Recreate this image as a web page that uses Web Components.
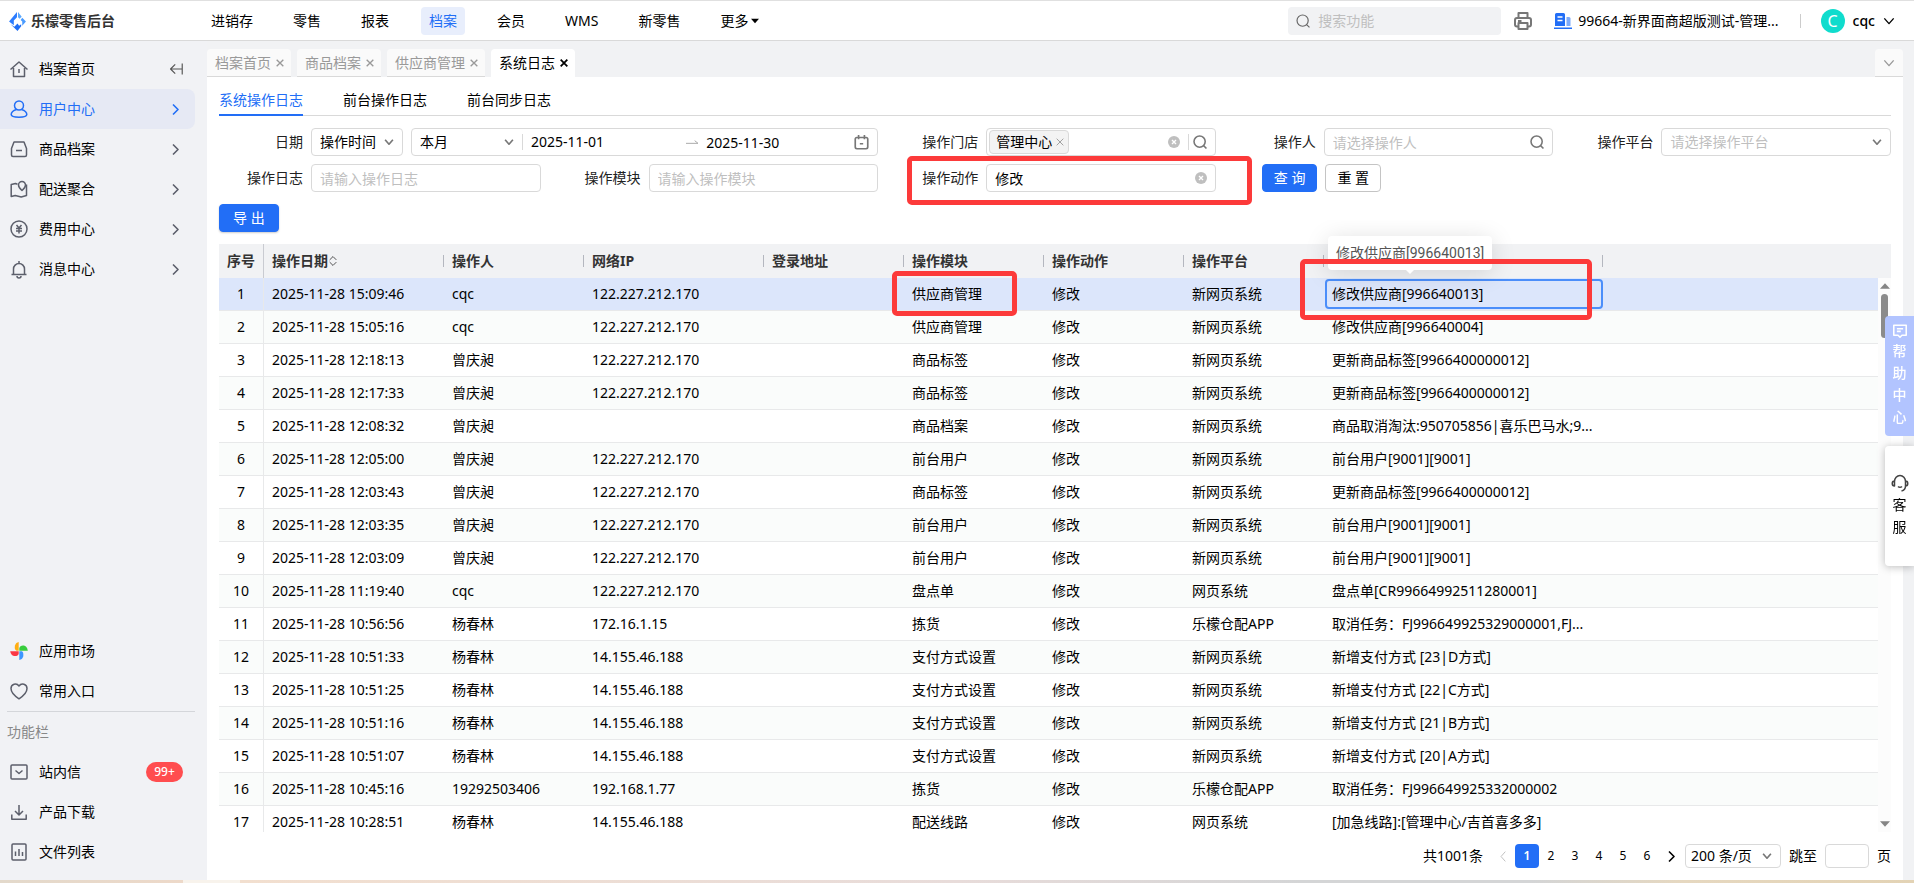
<!DOCTYPE html>
<html lang="zh-CN">
<head>
<meta charset="utf-8">
<title>系统日志</title>
<style>
    body {
        margin: 0;
        font: 14px/22px "Noto Sans", "Noto Sans CJK SC", sans-serif;
        color: #000;
        overflow: hidden;
    }
</style>
</head>
<body>
<log-app></log-app>

<script>
const base = `
    * { box-sizing: border-box; }
    button, input, select { font: inherit; color: inherit; margin: 0; padding: 0; border: 0; background: none; outline: 0; min-width: 0; }
    button { cursor: pointer; }
    select { appearance: none; text-overflow: ellipsis; }
    input::placeholder { color: #bfbfbf; }
    a { color: inherit; text-decoration: none; }
`;

// every icon is drawn on an 18 x 18 grid
const icons = {
    logo: '<g stroke="none"><path fill="#2b7cff" d="M8.500 0v5L5.500 8v4.500L1 9z"/><path fill="#5aa8ff" d="M9.500 0L13 4.500l-2 2-1.500-1.500z"/><path fill="#4a9bff" d="M13.500 5.500L17 9l-3.500 4V9L12 7.500z"/><path fill="#1f6ef5" d="M2.500 11.500L6 14l3-3 1.500 2 2-1.500v2L9 18z"/></g>',
    home: '<path d="M.5 9.500L9 2l8.500 7.500M3.500 8v8.500h11V8M9 9v4"/>',
    user: '<circle cx="9" cy="5.500" r="4.500"/><path d="M6.500 9.500C3.500 10.500 1.200 12.500 1.200 14.500c0 2 3 2.700 7.800 2.700s7.800-.7 7.800-2.700c0-2-2.300-4-5.300-5"/>',
    box: '<path d="M4 2h10l2.500 6.500V15a1.500 1.500 0 0 1-1.500 1.500H3A1.500 1.500 0 0 1 1.500 15V8.500zM6 10.500h6"/>',
    map: '<path d="M7.500 4.200L5.500 3.500 1.200 4.500v12l4-1 6 1.500 5.300-1.500V4.500"/><path d="M12 10.500S8.500 7.500 8.500 5a3.500 3.500 0 0 1 7 0c0 2.500-3.500 5.500-3.500 5.500z"/>',
    yen: '<circle cx="9" cy="9" r="8"/><path d="M6.500 5L9 8l2.500-3M9 8v5.500M6 8.500h6M6 11h6"/>',
    bell: '<path d="M1.500 14.500h15M3.500 14.500V9a5.500 5.500 0 0 1 11 0v5.500M7 16a2 2 0 0 0 4 0M9 1v2.500"/>',
    market: '<g stroke="none"><path fill="#ffae13" d="M8.700 8.700H6.500C4.500 7.500 4.500 5.500 5 3.500 5.500 1.500 7 .3 8.700 0z"/><path fill="#38cd3d" d="M9.300 8.700V6c1-2.200 2.700-2.700 4.500-2.400 2 .4 3.500 2 4 5.100z"/><path fill="#3d96ff" d="M9.300 9.300H12c1.500 1.200 1.500 3.200 1.200 5.200-.5 2-2 3.200-3.900 3.500z"/><path fill="#fb3845" d="M8.700 9.300V12c-1 2-3 2.300-4.700 2C2 13.600.6 12 .2 9.300z"/></g>',
    heart: '<path d="M9 16.800C4 13.500 1 10 1 6.500 1 2 6.500.5 9 4c2.500-3.500 8-2 8 2.500 0 3.500-3 7-8 10.300z"/>',
    mail: '<rect x="1" y="2" width="16" height="14" rx="1"/><path d="M5.500 7.500L9 10.500l3.500-3"/>',
    download: '<path d="M9 2v9.500M5 8l4 4 4-4M1.800 11.500v4.700h14.400v-4.700"/>',
    chart: '<rect x="2" y="1" width="14" height="16" rx="1"/><path d="M5.500 8.500V13M9 6v7M12.500 9v4"/>',
    collapse: '<path d="M17 2v14M17 9H2M8 3L2 9l6 6"/>',
    right: '<path d="M6 3l6 6-6 6"/>',
    left: '<path d="M12 1L5 9l7 8"/>',
    down: '<path d="M2 5l7 8 7-8"/>',
    search: '<circle cx="8.500" cy="8.500" r="7.200"/><path d="M13.300 13.300l4 4"/>',
    printer: '<path d="M4.500 6V1h9v5M4.500 14.500H3A2 2 0 0 1 1 12.500V8a2 2 0 0 1 2-2h12a2 2 0 0 1 2 2v4.500a2 2 0 0 1-2 2h-1.500M4 9h3.500"/><rect x="4.500" y="11" width="9" height="6"/>',
    building: '<g stroke="none"><path fill="#226ef6" d="M1 2.500A1.500 1.500 0 0 1 2.500 1h7A1.500 1.500 0 0 1 11 2.500V14H1zM0 15.500h18V17H0z"/><path fill="#7fabf9" d="M12.500 5H15a1.500 1.500 0 0 1 1.500 1.500V14h-4z"/></g><path stroke="#fff" d="M3.500 5h5M3.500 8.500h5"/>',
    calendar: '<rect x="1.500" y="3" width="15" height="13.500" rx="2"/><path d="M5.500 0v5M12.500 0v5M7 10.500h4"/>',
    clear: '<circle cx="9" cy="9" r="9" fill="#bfbfbf" stroke="none"/><path stroke="#fff" stroke-width="2" d="M6 6l6 6M12 6l-6 6"/>',
    close: '<path d="M1.500 1.500l15 15M16.500 1.500l-15 15"/>',
    range: '<path d="M0 11h18l-5-4"/>',
    sort: '<path d="M3 7l6-6 6 6M3 11l6 6 6-6"/>',
    caret: '<path fill="currentColor" stroke="none" d="M0 4h18L9 14z"/>',
    help: '<path d="M1 1.500h16v13h-5.500L9 17l-2.500-2.500H1zM5 6h8M5 9.500h5"/>',
    service: '<path d="M3.500 11V7.500a5.500 6 0 0 1 11 0V12c0 2.500-2 4.500-4 5M3.500 7C.5 7 .5 12 3.500 12zM14.500 7c3 0 3 5 0 5M7 12.500c1 1 3 1 4 0"/>'
};

class UiIcon extends HTMLElement {
    connectedCallback() {
        const size = this.getAttribute("size") || 18;
        const stroke = this.getAttribute("stroke") || 1.5;
        this.attachShadow({mode: "open"}).innerHTML = `
            <style>
                :host { display: inline-flex; flex: none; }
                svg { display: block; fill: none; stroke: currentColor; stroke-linejoin: round; overflow: visible; }
            </style>
            <svg width="${size}" height="${size}" viewBox="0 0 18 18" stroke-width="${stroke}" aria-hidden="true">${icons[this.getAttribute("name")]}</svg>
        `;
    }
}

class AppHeader extends HTMLElement {
    connectedCallback() {
        const nav = ["进销存", "零售", "报表", "档案", "会员", "WMS", "新零售"];
        this.attachShadow({mode: "open"}).innerHTML = `
            <style>
                ${base}
                :host { display: flex; align-items: center; height: 41px; background: #fff; border-top: 1px solid #e0e0e0; border-bottom: 1px solid #d9d9d9; padding-top: 1px; }
                .brand { display: flex; align-items: center; gap: 4px; width: 203px; padding-left: 8px; font-weight: 700; color: #333; }
                nav { display: flex; gap: 24px; flex: 1; }
                nav a { display: flex; align-items: center; gap: 3px; height: 28px; padding: 0 8px; border-radius: 4px; }
                nav a.on { background: #e8eefc; color: #226ef6; }
                .search { display: flex; align-items: center; gap: 8px; width: 213px; height: 28px; padding: 0 8px; border-radius: 4px; background: #f1f2f4; color: #666; }
                .search input { flex: 1; }
                .print { display: flex; margin: 0 22px 0 13px; color: #777; }
                .store { display: flex; align-items: center; gap: 6px; }
                .user { display: flex; align-items: center; gap: 8px; margin: 0 19px 0 21px; font-weight: 500; }
                .user::before { content: ""; width: 1px; height: 14px; margin-right: 12px; background: #ccc; }
                .avatar { width: 24px; height: 24px; border-radius: 50%; background: #10dccd; color: #fff; line-height: 24px; text-align: center; font-weight: 400; font-size: 16px; }
            </style>
            <div class="brand"><ui-icon name="logo" size="19"></ui-icon>乐檬零售后台</div>
            <nav>
                ${nav.map(n => `<a href="#" class="${n === "档案" ? "on" : ""}">${n}</a>`).join("")}
                <a href="#">更多<ui-icon name="caret" size="8"></ui-icon></a>
            </nav>
            <div class="search"><ui-icon name="search" size="14"></ui-icon><input aria-label="搜索功能" placeholder="搜索功能"></div>
            <button class="print" aria-label="打印"><ui-icon name="printer" stroke="2"></ui-icon></button>
            <a class="store" href="#"><ui-icon name="building"></ui-icon>99664-新界面商超版测试-管理...</a>
            <div class="user"><span class="avatar">C</span>cqc<ui-icon name="down" size="12" stroke="2"></ui-icon></div>
        `;
    }
}

class MenuItem extends HTMLElement {
    connectedCallback() {
        this.attachShadow({mode: "open"}).innerHTML = `
            <style>
                ${base}
                :host { display: block; }
                a { display: flex; align-items: center; gap: 11px; height: 40px; margin-right: 12px; padding: 0 12px 0 10px; border-radius: 0 8px 8px 0; }
                ui-icon { color: #5c5f6b; }
                span { flex: 1; }
                :host([active]) a { background: #e6e9f4; color: #226ef6; }
                :host([active]) ui-icon { color: #226ef6; }
            </style>
            <a href="#"><ui-icon name="${this.getAttribute("icon")}"></ui-icon><span><slot></slot></span><slot name="end"></slot>
            ${this.hasAttribute("more") ? '<ui-icon name="right" size="15" stroke="2"></ui-icon>' : ""}</a>
        `;
    }
}

class SideMenu extends HTMLElement {
    connectedCallback() {
        this.attachShadow({mode: "open"}).innerHTML = `
            <style>
                ${base}
                :host { display: flex; flex-direction: column; width: 207px; flex: none; padding: 8px 0; background: #f1f2f5; }
                .space { flex: 1; }
                .line { height: 1px; margin: 0 12px 0 7px; background: #d4d6da; }
                .title { line-height: 40px; padding-left: 7px; color: #888; }
                .badge { min-width: 37px; height: 20px; border-radius: 10px; background: #ff4d4f; color: #fff; font-size: 12px; font-weight: 500; line-height: 20px; text-align: center; }
                .fold { color: #555; }
            </style>
            <menu-item icon="home">档案首页<ui-icon class="fold" slot="end" name="collapse" size="14"></ui-icon></menu-item>
            <menu-item icon="user" active more>用户中心</menu-item>
            <menu-item icon="box" more>商品档案</menu-item>
            <menu-item icon="map" more>配送聚合</menu-item>
            <menu-item icon="yen" more>费用中心</menu-item>
            <menu-item icon="bell" more>消息中心</menu-item>
            <div class="space"></div>
            <menu-item icon="market">应用市场</menu-item>
            <menu-item icon="heart">常用入口</menu-item>
            <div class="line"></div>
            <div class="title">功能栏</div>
            <menu-item icon="mail">站内信<b class="badge" slot="end">99+</b></menu-item>
            <menu-item icon="download">产品下载</menu-item>
            <menu-item icon="chart">文件列表</menu-item>
        `;
    }
}

class PageTabs extends HTMLElement {
    connectedCallback() {
        const tabs = ["档案首页", "商品档案", "供应商管理", "系统日志"];
        this.attachShadow({mode: "open"}).innerHTML = `
            <style>
                ${base}
                :host { display: flex; gap: 6px; height: 36px; padding-top: 8px; background: #f1f2f4; }
                button { display: flex; align-items: center; gap: 5px; height: 28px; padding: 0 7px 0 8px; border-radius: 4px 4px 0 0; border-bottom: 1px solid #d9d9d9; background: #fafafa; color: #999; }
                button.on { background: #fff; border-color: #fff; color: #000; }
                .list { margin-left: auto; padding: 0 8px; }
            </style>
            ${tabs.map(t => `<button class="${t === "系统日志" ? "on" : ""}">${t}<ui-icon name="close" size="8" stroke="${t === "系统日志" ? 4 : 3}"></ui-icon></button>`).join("")}
            <button class="list" aria-label="全部标签"><ui-icon name="down" size="12" stroke="2"></ui-icon></button>
        `;
    }
}

class SubTabs extends HTMLElement {
    connectedCallback() {
        this.attachShadow({mode: "open"}).innerHTML = `
            <style>
                ${base}
                :host { display: flex; gap: 40px; height: 39px; border-bottom: 1px solid #d9d9d9; }
                a { padding-top: 12px; height: 39px; }
                a.on { color: #226ef6; border-bottom: 2px solid #226ef6; }
            </style>
            <a class="on" href="#">系统操作日志</a>
            <a href="#">前台操作日志</a>
            <a href="#">前台同步日志</a>
        `;
    }
}

class FormField extends HTMLElement {
    connectedCallback() {
        this.attachShadow({mode: "open"}).innerHTML = `
            <style>
                :host { display: flex; align-items: center; gap: 8px; position: relative; min-width: 0; }
                .label { width: 84px; flex: none; text-align: right; color: #222; }
                .control { display: flex; gap: 8px; flex: 1; min-width: 0; }
            </style>
            <div class="label"><slot name="label"></slot></div>
            <div class="control"><slot></slot></div>
            <slot name="over"></slot>
        `;
    }
}

// red frame that marks a place, sized by the inset its user gives
class RedFrame extends HTMLElement {
    connectedCallback() {
        this.attachShadow({mode: "open"}).innerHTML = `
            <style>
                :host { display: block; position: absolute; z-index: 3; border: 5px solid #fc3a3a; border-radius: 5px; pointer-events: none; }
            </style>
        `;
    }
}

class FilterForm extends HTMLElement {
    connectedCallback() {
        this.attachShadow({mode: "open"}).innerHTML = `
            <style>
                ${base}
                :host { display: block; }
                form { display: grid; grid-template-columns: repeat(5, 1fr); gap: 8px 16px; margin: 12px 0; }
                .wide { grid-column: span 2; }
                .box { display: flex; align-items: center; gap: 8px; flex: 1; min-width: 0; height: 28px; padding: 0 8px; border: 1px solid #d9d9d9; border-radius: 4px; background: #fff; }
                .box > input, .box > select { flex: 1; height: 26px; }
                .box ui-icon { color: #777; }
                .type { flex: none; width: 92px; gap: 0; }
                .range .month { flex: none; width: 76px; }
                .range .from { border-left: 1px solid #d9d9d9; height: 16px; padding-left: 8px; }
                .range .to { flex: none; width: 140px; }
                .range ui-icon.arrow { color: #aaa; }
                .tag { display: flex; align-items: center; gap: 4px; height: 24px; margin-left: -6px; padding: 0 4px 0 6px; border: 1px solid #d9d9d9; border-radius: 4px; background: #f3f3f3; flex: none; }
                .split { width: 1px; height: 16px; background: #d9d9d9; margin-right: -4px; }
                .empty { color: #bfbfbf; }
                .actions { display: flex; gap: 8px; padding-left: 30px; }
                .btn { height: 28px; padding: 0 11px; border: 1px solid #c4c4c4; border-radius: 4px; background: #fff; white-space: pre; }
                .primary { background: #226ef6; border-color: #226ef6; color: #fff; }
                .export { display: block; padding: 0 13px; box-shadow: 0 1px 2px #0003; }
                .frame { inset: -8px -36px -13px 13px; }
            </style>
            <form>
                <form-field class="wide">
                    <label slot="label" for="type">日期</label>
                    <div class="box type"><select id="type"><option>操作时间</option></select><ui-icon name="down" size="10" stroke="3"></ui-icon></div>
                    <div class="box range">
                        <select class="month" aria-label="时间范围"><option>本月</option></select><ui-icon name="down" size="10" stroke="3"></ui-icon>
                        <input class="from" aria-label="开始日期" value="2025-11-01">
                        <ui-icon class="arrow" name="range" size="12"></ui-icon>
                        <input class="to" aria-label="结束日期" value="2025-11-30">
                        <ui-icon name="calendar" size="15" stroke="2"></ui-icon>
                    </div>
                </form-field>
                <form-field>
                    <label slot="label" for="store">操作门店</label>
                    <div class="box"><span class="tag">管理中心<ui-icon name="close" size="8"></ui-icon></span><input id="store"><ui-icon name="clear" size="12"></ui-icon><span class="split"></span><ui-icon name="search" size="14" stroke="2"></ui-icon></div>
                </form-field>
                <form-field>
                    <label slot="label" for="operator">操作人</label>
                    <div class="box"><input id="operator" placeholder="请选择操作人"><ui-icon name="search" size="14" stroke="2"></ui-icon></div>
                </form-field>
                <form-field>
                    <label slot="label" for="platform">操作平台</label>
                    <div class="box"><select id="platform" class="empty"><option>请选择操作平台</option></select><ui-icon name="down" size="10" stroke="3"></ui-icon></div>
                </form-field>
                <form-field>
                    <label slot="label" for="log">操作日志</label>
                    <div class="box"><input id="log" placeholder="请输入操作日志"></div>
                </form-field>
                <form-field>
                    <label slot="label" for="module">操作模块</label>
                    <div class="box"><input id="module" placeholder="请输入操作模块"></div>
                </form-field>
                <form-field>
                    <label slot="label" for="action">操作动作</label>
                    <div class="box"><input id="action" value="修改"><ui-icon name="clear" size="12"></ui-icon></div>
                    <red-frame class="frame" slot="over"></red-frame>
                </form-field>
                <div class="actions">
                    <button type="button" class="btn primary">查 询</button>
                    <button type="button" class="btn">重 置</button>
                </div>
            </form>
            <button class="btn primary export">导 出</button>
        `;
    }
}

const rows = [
    ["15:09:46", "cqc", "122.227.212.170", "供应商管理", "新网页系统", "修改供应商[996640013]"],
    ["15:05:16", "cqc", "122.227.212.170", "供应商管理", "新网页系统", "修改供应商[996640004]"],
    ["12:18:13", "曾庆昶", "122.227.212.170", "商品标签", "新网页系统", "更新商品标签[9966400000012]"],
    ["12:17:33", "曾庆昶", "122.227.212.170", "商品标签", "新网页系统", "更新商品标签[9966400000012]"],
    ["12:08:32", "曾庆昶", "", "商品档案", "新网页系统", "商品取消淘汰:950705856|喜乐巴马水;9..."],
    ["12:05:00", "曾庆昶", "122.227.212.170", "前台用户", "新网页系统", "前台用户[9001][9001]"],
    ["12:03:43", "曾庆昶", "122.227.212.170", "商品标签", "新网页系统", "更新商品标签[9966400000012]"],
    ["12:03:35", "曾庆昶", "122.227.212.170", "前台用户", "新网页系统", "前台用户[9001][9001]"],
    ["12:03:09", "曾庆昶", "122.227.212.170", "前台用户", "新网页系统", "前台用户[9001][9001]"],
    ["11:19:40", "cqc", "122.227.212.170", "盘点单", "网页系统", "盘点单[CR99664992511280001]"],
    ["10:56:56", "杨春林", "172.16.1.15", "拣货", "乐檬仓配APP", "取消任务：FJ996649925329000001,FJ..."],
    ["10:51:33", "杨春林", "14.155.46.188", "支付方式设置", "新网页系统", "新增支付方式 [23|D方式]"],
    ["10:51:25", "杨春林", "14.155.46.188", "支付方式设置", "新网页系统", "新增支付方式 [22|C方式]"],
    ["10:51:16", "杨春林", "14.155.46.188", "支付方式设置", "新网页系统", "新增支付方式 [21|B方式]"],
    ["10:51:07", "杨春林", "14.155.46.188", "支付方式设置", "新网页系统", "新增支付方式 [20|A方式]"],
    ["10:45:16", "19292503406", "192.168.1.77", "拣货", "乐檬仓配APP", "取消任务：FJ996649925332000002"],
    ["10:28:51", "杨春林", "14.155.46.188", "配送线路", "网页系统", "[加急线路]:[管理中心/吉首喜多多]"]
];

class LogTable extends HTMLElement {
    connectedCallback() {
        // the log column has no title of its own
        const heads = ["操作日期", "操作人", "网络IP", "登录地址", "操作模块", "操作动作", "操作平台", ""];
        const widths = [45, 180, 140, 180, 140, 140, 140, 140, 279];
        this.attachShadow({mode: "open"}).innerHTML = `
            <style>
                ${base}
                :host { display: block; position: relative; flex: 1; min-height: 0; margin-top: 12px; clip-path: inset(-24px 0 0 0); }
                table { width: 100%; table-layout: fixed; border-collapse: separate; border-spacing: 0; }
                th { position: relative; height: 34px; padding: 0 8px; background: #f1f2f4; color: #333; text-align: left; font-weight: 700; white-space: nowrap; }
                th:not(:first-child, :last-child)::after { content: ""; position: absolute; right: 0; top: 11px; width: 1px; height: 12px; background: #b4b7bf; }
                td { position: relative; height: 33px; padding: 0 8px; border-bottom: 1px solid #e8e9ea; white-space: nowrap; }
                th:first-child { border-right: 1px solid #c9cbd1; padding: 0; text-align: center; }
                td:first-child { border-right: 1px solid #e8e9ea; padding: 0; text-align: center; }
                tr:nth-child(even) td { background: #fafcfb; }
                tr.on td { background: #dce6fb; }
                .focus { position: absolute; inset: 1px 0 1px 1px; border: 2px solid #4b8efa; border-radius: 4px; }
                .module { inset: -7px 27px -6px -12px; }
                .log { inset: -19px 11px -10px -24px; }
                .tip { position: absolute; left: 4px; bottom: 40px; z-index: 2; height: 34px; padding: 0 8px; border-radius: 4px; background: #fff; color: #555; font-family: Roboto, "Noto Sans CJK SC", sans-serif; line-height: 34px; box-shadow: 0 3px 24px #0002; }
                .tip::after { content: ""; position: absolute; left: 50%; top: 100%; margin-left: -4px; border: 4px solid transparent; border-top-color: #fff; }
                .bar { position: absolute; top: 34px; right: 0; bottom: 0; width: 13px; display: flex; flex-direction: column; align-items: center; padding: 3px 0; background: #fcfcfc; color: #858585; }
                .bar i { width: 7px; height: 44px; margin: 3px 0 auto; border-radius: 4px; background: #8b8b8b; }
                .up { transform: rotate(180deg); }
            </style>
            <table>
                <colgroup>${widths.map(w => `<col style="width:${w}px">`).join("")}<col></colgroup>
                <thead><tr><th>序号</th>${heads.map((h, i) => `<th>${h}${i ? "" : '<ui-icon name="sort" size="10"></ui-icon>'}</th>`).join("")}<th></th></tr></thead>
                <tbody>
                    ${rows.map(([time, who, ip, module, platform, log], i) => `
                    <tr class="${i ? "" : "on"}">
                        <td>${i + 1}</td><td>2025-11-28 ${time}</td><td>${who}</td><td>${ip}</td><td></td>
                        <td>${module}${i ? "" : '<red-frame class="module"></red-frame>'}</td>
                        <td>修改</td><td>${platform}</td>
                        <td>${log}${i ? "" : `<div class="focus"></div><div class="tip" role="tooltip">${log}</div><red-frame class="log"></red-frame>`}</td>
                        <td></td>
                    </tr>`).join("")}
                </tbody>
            </table>
            <div class="bar"><ui-icon class="up" name="caret" size="10"></ui-icon><i></i><ui-icon name="caret" size="10"></ui-icon></div>
        `;
    }
}

class PagePager extends HTMLElement {
    connectedCallback() {
        this.attachShadow({mode: "open"}).innerHTML = `
            <style>
                ${base}
                :host { display: flex; justify-content: flex-end; align-items: center; height: 24px; margin: 12px 0; }
                .pages { display: flex; margin: 0 2px 0 8px; }
                .pages button { display: flex; align-items: center; justify-content: center; width: 24px; height: 24px; border-radius: 4px; font-size: 12px; }
                .pages .on { background: #226ef6; color: #fff; font-weight: 600; }
                .pages .prev { color: #bbb; }
                .size { display: flex; align-items: center; width: 96px; height: 24px; padding: 0 8px 0 5px; border: 1px solid #d9d9d9; border-radius: 4px; color: #000; }
                .size select { flex: 1; height: 22px; }
                .size ui-icon { color: #777; }
                label { display: flex; align-items: center; gap: 8px; margin-left: 8px; }
                label input { width: 44px; height: 24px; border: 1px solid #d9d9d9; border-radius: 4px; }
            </style>
            共1001条
            <div class="pages">
                <button class="prev" aria-label="上一页"><ui-icon name="left" size="11"></ui-icon></button>
                <button class="on">1</button><button>2</button><button>3</button><button>4</button><button>5</button><button>6</button>
                <button aria-label="下一页"><ui-icon name="right" size="15" stroke="2"></ui-icon></button>
            </div>
            <div class="size"><select aria-label="每页条数"><option>200 条/页</option></select><ui-icon name="down" size="10" stroke="3"></ui-icon></div>
            <label>跳至<input>页</label>
        `;
    }
}

class FloatBar extends HTMLElement {
    connectedCallback() {
        this.attachShadow({mode: "open"}).innerHTML = `
            <style>
                ${base}
                :host { position: fixed; right: 0; top: 316px; z-index: 5; width: 29px; display: flex; flex-direction: column; gap: 10px; }
                button { display: flex; flex-direction: column; align-items: center; justify-content: center; gap: 2px; height: 120px; border-radius: 4px 0 0 4px; line-height: 22px; background: #fff; box-shadow: 0 1px 8px #0004; }
                .help { background: #b2c4ff; color: #fff; box-shadow: none; font-weight: 500; }
                .service ui-icon { color: #444; }
                span { width: 14px; }
            </style>
            <button class="help"><ui-icon name="help" size="14" stroke="2"></ui-icon><span>帮助中心</span></button>
            <button class="service"><ui-icon name="service"></ui-icon><span>客服</span></button>
        `;
    }
}

class LogApp extends HTMLElement {
    connectedCallback() {
        this.attachShadow({mode: "open"}).innerHTML = `
            <style>
                ${base}
                :host { display: flex; flex-direction: column; height: 100vh; background: #f1f2f4; }
                .body { display: flex; flex: 1; min-height: 0; }
                main { display: flex; flex-direction: column; flex: 1; min-width: 0; margin-right: 11px; }
                .panel { display: flex; flex-direction: column; flex: 1; min-height: 0; padding: 0 12px; background: #fff; }
                .desk { height: 3px; background: linear-gradient(90deg, #e3d9cb, #edd9c9 183px, #f8f3ec 183px 240px, #f2dfcf 240px, #e8dcda 50%, #d4d5d6 68%, #d4d5d6 80%, #e6d8c0 88%, #e3d3b5); }
            </style>
            <app-header></app-header>
            <div class="body">
                <side-menu></side-menu>
                <main>
                    <page-tabs></page-tabs>
                    <div class="panel">
                        <sub-tabs></sub-tabs>
                        <filter-form></filter-form>
                        <log-table></log-table>
                        <page-pager></page-pager>
                    </div>
                </main>
            </div>
            <div class="desk"></div>
            <float-bar></float-bar>
        `;
    }
}

customElements.define("ui-icon", UiIcon);
customElements.define("app-header", AppHeader);
customElements.define("menu-item", MenuItem);
customElements.define("side-menu", SideMenu);
customElements.define("page-tabs", PageTabs);
customElements.define("sub-tabs", SubTabs);
customElements.define("form-field", FormField);
customElements.define("red-frame", RedFrame);
customElements.define("filter-form", FilterForm);
customElements.define("log-table", LogTable);
customElements.define("page-pager", PagePager);
customElements.define("float-bar", FloatBar);
customElements.define("log-app", LogApp);
</script>
</body>
</html>
